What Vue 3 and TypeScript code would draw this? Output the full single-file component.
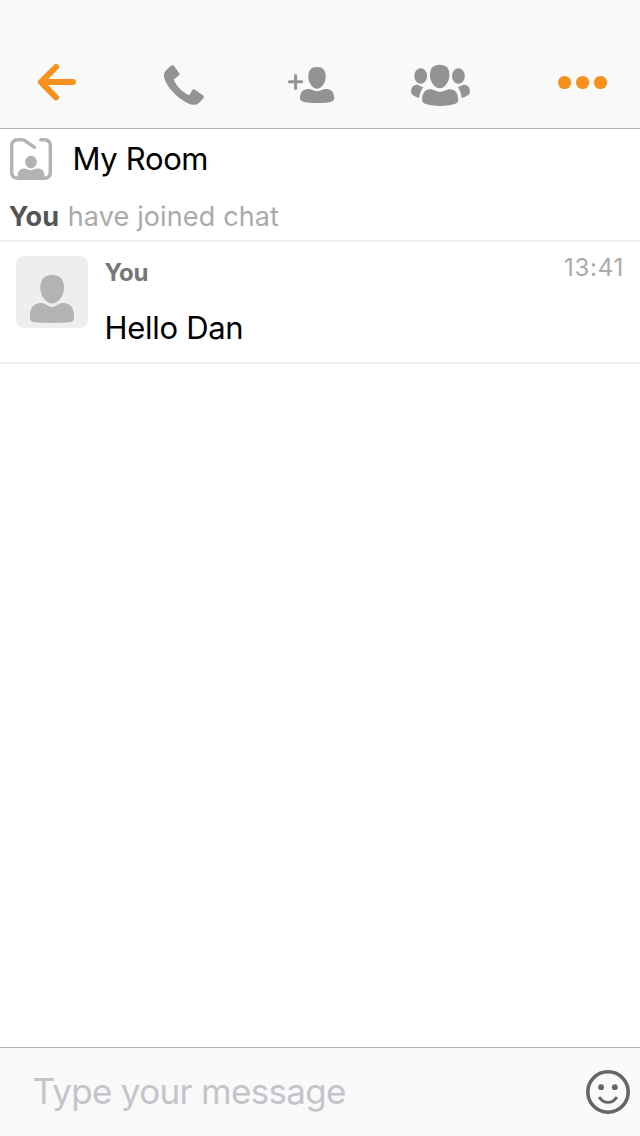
<script setup lang="ts">
import { ref } from 'vue'

interface Message {
  author: string
  text: string
  time: string
}

const room = 'My Room'
const messages: Message[] = [{ author: 'You', text: 'Hello Dan', time: '13:41' }]
const draft = ref('')
</script>

<template>
  <main class="screen">
    <header class="toolbar">
      <svg class="icon back" viewBox="36 62 42 40" fill="none" stroke="#f7901e" stroke-width="6" stroke-linecap="round" stroke-linejoin="round">
        <path d="M73 82H41M56 67L41 82.1L56 97.3" />
      </svg>
      <svg class="icon phone" viewBox="162 62 44 44" fill="#939393">
        <path d="M165.2 71.2L171.3 65.6Q172.8 64.5 174 66L179.3 73.2Q180 74.4 179 75.2L173.8 79.4C175.8 85.6 182 91.8 189.3 95.3L192.3 90Q193.2 88.8 194.6 89.6L203.2 95.5Q204.7 96.7 203.4 98.2L198.9 103C196 105.6 192.4 105.2 188 103.3C178 98.8 167.5 88 164.6 79Q163.1 73.9 165.2 71.2Z" />
      </svg>
      <svg class="icon add" viewBox="286 64 50 42" fill="#939393">
        <path d="M289.4 81.7H301.6M295.6 75.4V88.6" fill="none" stroke="#939393" stroke-width="3" stroke-linecap="round" />
        <path d="M317 67C322.8 67 325.7 70.3 325.7 76.5C325.7 83 321.4 88.7 317 88.7S308.3 83 308.3 76.5C308.3 70.3 311.2 67 317 67Z" />
        <path d="M308 89.1C312 89.1 313.3 91.2 317 91.2S322.3 89.1 326.5 89.1C331.5 89.1 334.3 92.5 334.2 98.5Q334.2 100.7 332 101.4C327 103.4 307.4 103.4 302.4 101.4Q300 100.7 300 98.5C299.9 92.5 302.8 89.1 308 89.1Z" />
      </svg>
      <svg class="icon group" viewBox="410 62 62 46" fill="#939393">
        <path d="M439.7 64.8C446.2 64.8 449.4 68.3 449.4 75C449.4 82.2 444.6 88.3 439.7 88.3S429.9 82.2 429.9 75C429.9 68.3 433.2 64.8 439.7 64.8Z" />
        <path d="M430 89.3C434.5 89.3 435.7 91.8 440.2 91.8S446 89.3 450.3 89.3C455.5 89.3 458.3 93.5 458.3 100Q458.3 102.7 456 103.6C449 106.7 431.4 106.7 424.4 103.6Q422.1 102.7 422.1 100C422.1 93.5 424.8 89.3 430 89.3Z" />
        <ellipse cx="420.7" cy="76" rx="6.4" ry="7.7" />
        <ellipse cx="458.4" cy="76" rx="6.4" ry="7.7" />
        <path d="M416.5 84.8Q418.5 84.8 420 86L423.3 87.2Q419.8 91.2 419.2 97.9Q415.5 97.1 412.4 94.8Q410.7 93.3 411.1 90.4C411.7 86.8 413.5 84.9 416.5 84.8Z" />
        <path d="M464.6 84.8Q462.6 84.8 461 86L457.8 87.2Q461.1 91.2 461.6 97.9Q465.4 97.1 468.6 94.8Q470.3 93.3 469.9 90.4C469.3 86.8 467.5 84.9 464.6 84.8Z" />
      </svg>
      <svg class="icon more" viewBox="556 74 54 17" fill="#f7901e">
        <circle cx="564.6" cy="82.5" r="6.6" />
        <circle cx="582.6" cy="82.5" r="6.6" />
        <circle cx="600.5" cy="82.5" r="6.6" />
      </svg>
    </header>

    <section class="room">
      <div class="room-title">
        <svg class="room-icon" viewBox="10 138 42 42" fill="#b3b3b3">
          <path d="M34.4 147.4L25.2 140.8Q23.9 139.7 22 139.7H18Q11.7 139.7 11.7 146V172Q11.7 178.3 18 178.3H44Q50.3 178.3 50.3 172V146Q50.3 139.7 44 139.7H40.7" fill="none" stroke="#b3b3b3" stroke-width="3.4" stroke-linecap="round" />
          <ellipse cx="31" cy="162.1" rx="5.9" ry="6.3" />
          <path d="M17.7 179C17.3 172 19 168.6 24.2 168.6C27.2 168.6 28 170.2 31 170.2S34.8 168.6 38 168.6C43.2 168.6 44.7 172 44.4 179Z" />
        </svg>
        <h1 class="room-name">{{ room }}</h1>
      </div>
      <p class="notice"><strong class="notice-user">You</strong> have joined chat</p>
    </section>

    <section class="messages">
      <article v-for="message in messages" :key="message.time" class="message">
        <div class="avatar">
          <svg class="person" viewBox="30 275 44 48" fill="#b3b3b3">
            <path d="M52.1 275C60 275 64 279.4 64 287.8C64 296.2 58 303.6 52.1 303.6S40.3 296.2 40.3 287.8C40.3 279.4 44.3 275 52.1 275Z" />
            <path d="M41 303.1C46.2 303.1 47.5 307 52.1 307S58 303.1 63.2 303.1C70.5 303.1 74 308 74 315.5V318Q74 321.7 69.5 322.3Q52 323.6 34.5 322.3Q30 321.7 30 318V315.5C30 308 33.7 303.1 41 303.1Z" />
          </svg>
        </div>
        <div class="content">
          <span class="author">{{ message.author }}</span>
          <p class="text">{{ message.text }}</p>
        </div>
        <time class="time">{{ message.time }}</time>
      </article>
    </section>

    <footer class="composer">
      <input v-model="draft" class="input" type="text" placeholder="Type your message" />
      <svg class="smile" viewBox="586 1070 44 44" fill="none" stroke="#666">
        <circle cx="608" cy="1092" r="20.2" stroke-width="3.6" />
        <circle cx="601.1" cy="1087.2" r="2.9" fill="#666" stroke="none" />
        <circle cx="614.8" cy="1087.2" r="2.9" fill="#666" stroke="none" />
        <path d="M599.2 1097Q602.3 1102.4 608 1102.4T616.8 1097" stroke-width="2.8" />
      </svg>
    </footer>
  </main>
</template>

<style>
body {
  margin: 0;
}
</style>

<style scoped>
.screen {
  box-sizing: border-box;
  display: flex;
  flex-direction: column;
  width: 640px;
  height: 1136px;
  overflow: hidden;
  background: #fff;
  color: #000;
  font-family: Inter, "Liberation Sans", sans-serif;
}
.toolbar {
  box-sizing: border-box;
  display: flex;
  align-items: flex-start;
  height: 129px;
  padding: 62px 30px 0 36px;
  border-bottom: 1px solid #b2b2b2;
  background: linear-gradient(#f8f8f8 40px, #f9f9f9 40px);
}
.icon {
  display: block;
  flex: none;
}
.back { width: 42px; height: 40px; }
.phone { width: 44px; height: 44px; margin-left: 84px; }
.add { width: 50px; height: 42px; margin: 2px 0 0 80px; }
.group { width: 62px; height: 46px; margin-left: 74px; }
.more { width: 54px; height: 17px; margin: 12px 0 0 84px; }
.room {
  box-sizing: border-box;
  height: 113px;
  padding: 9px 9px 0 10px;
  border-bottom: 2px solid #eee;
}
.room-title {
  display: flex;
  align-items: center;
  gap: 20.5px;
  height: 42px;
}
.room-icon {
  width: 42px;
  height: 42px;
}
.room-name {
  margin: 0;
  font-size: 31px;
  font-weight: 400;
  line-height: 42px;
  letter-spacing: -0.35px;
}
.notice {
  margin: 19px 0 0 -1.3px;
  color: #aaa;
  font-size: 27px;
  line-height: 36px;
  letter-spacing: 0.13px;
}
.notice-user {
  margin-right: 0.8px;
  color: #555;
  font-weight: 700;
}
.messages {
  flex: 1;
}
.message {
  box-sizing: border-box;
  display: flex;
  align-items: flex-start;
  height: 122px;
  padding: 14px 16px 0;
  border-bottom: 2px solid #eee;
}
.avatar {
  box-sizing: border-box;
  display: flex;
  justify-content: center;
  width: 72px;
  height: 72px;
  padding-top: 19px;
  border-radius: 8px;
  background: #eee;
}
.person {
  width: 44px;
  height: 48px;
}
.content {
  flex: 1;
  padding-left: 16.4px;
}
.author {
  display: block;
  color: #777;
  font-size: 24px;
  font-weight: 700;
  line-height: 34px;
  letter-spacing: -0.3px;
}
.text {
  margin: 18px 0 0;
  font-size: 31px;
  line-height: 40px;
  letter-spacing: -0.28px;
}
.time {
  color: #aaa;
  font-size: 24px;
  line-height: 23px;
  letter-spacing: 0.75px;
}
.composer {
  box-sizing: border-box;
  display: flex;
  align-items: center;
  height: 89px;
  padding: 0 10px 0 32.6px;
  border-top: 1px solid #b2b2b2;
  background: #f9f9f9;
}
.input {
  flex: 1;
  min-width: 0;
  height: 60px;
  margin-bottom: 2px;
  padding: 0;
  border: 0;
  outline: 0;
  background: none;
  color: #000;
  font: 400 35px/60px Inter, "Liberation Sans", sans-serif;
  letter-spacing: -0.7px;
}
.input::placeholder {
  color: #c4c4ca;
  opacity: 1;
}
.smile {
  width: 44px;
  height: 44px;
}
</style>
